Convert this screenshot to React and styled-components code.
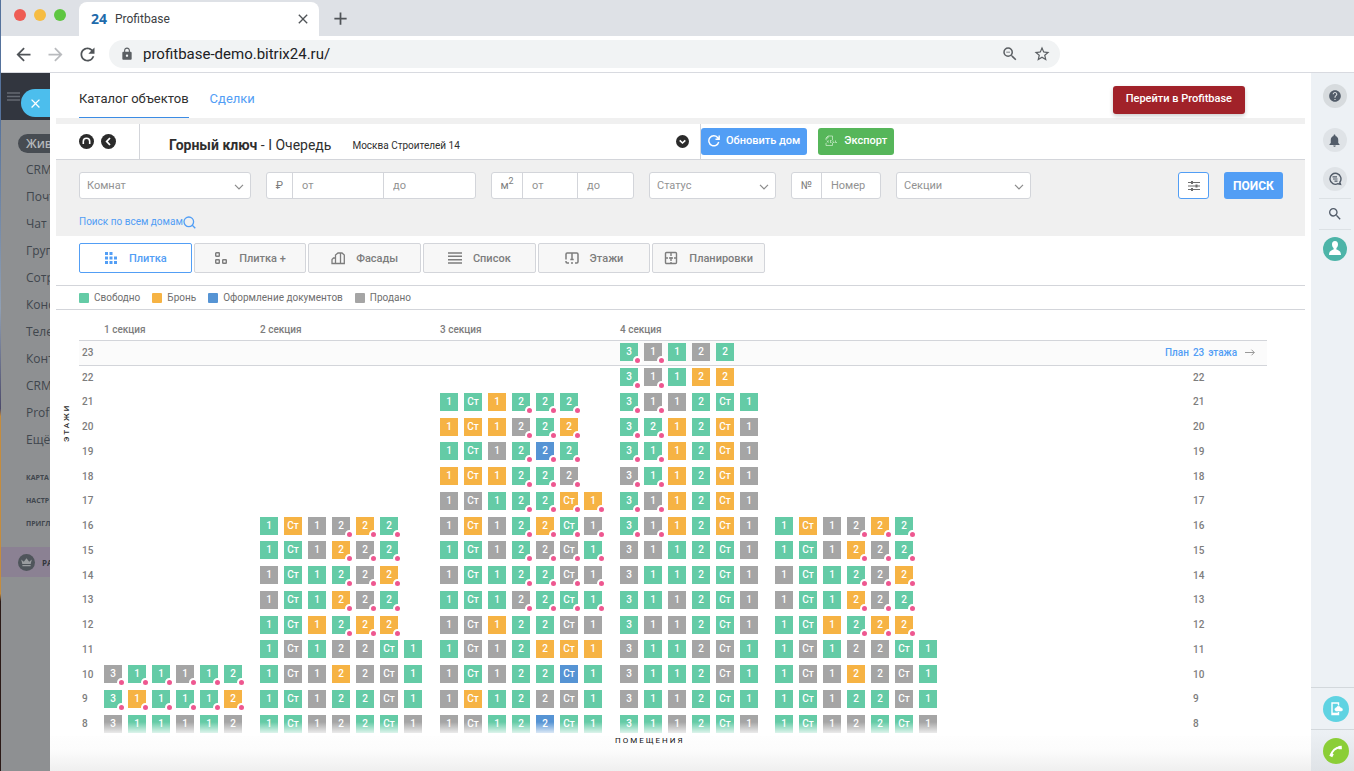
import styled, { createGlobalStyle, css } from 'styled-components'
import {
	MdAdd,
	MdArrowBack,
	MdArrowForward,
	MdClose,
	MdHelp,
	MdLock,
	MdNotifications,
	MdRefresh,
	MdSearch,
	MdStarBorder,
	MdZoomOut
} from 'react-icons/md'

const colors = {
	free: '#64cba6',
	booked: '#f6b344',
	docs: '#5694d4',
	sold: '#a5a5a5',
	blue: '#529ef5',
	grey: '#f0f0f0',
	line: '#d3d5da',
	text: '#7d7d7d',
	dark: '#2f2f2f'
}

const STATUS = { g: colors.free, o: colors.booked, b: colors.docs, s: colors.sold }

// rooms + status letter, a star marks a flat with a promo
const SECTION_1 = {
	10: '3s* 1g* 1g* 1s* 1g* 2g*',
	9: '3g* 1o* 1g* 1g* 1g* 2o*',
	8: '3s 1g 1g 1s 1g 2s'
}

const SECTION_2 = {
	16: '1g Стo 1s 2s* 2o* 2g*',
	15: '1g Стg 1s 2o* 2s* 2g*',
	14: '1s Стg 1g 2g* 2s* 2o*',
	13: '1s Стg 1g 2o* 2s* 2g*',
	12: '1g Стg 1o 2g* 2o* 2o*',
	11: '1g Стs 1g 2s 2s Стg 1g',
	10: '1g Стs 1s 2o 2s Стs 1g',
	9: '1g Стg 1s 2g 2g Стs 1g',
	8: '1g Стg 1s 2s 2g Стg 1s'
}

const SECTION_3 = {
	21: '1g Стg 1o 2g* 2g* 2g*',
	20: '1o Стo 1o 2s* 2g* 2o*',
	19: '1g Стg 1s 2g* 2b* 2g*',
	18: '1o Стo 1o 2g* 2g* 2s*',
	17: '1s Стs 1g 2g* 2g* Стo* 1o*',
	16: '1s Стo 1s 2g* 2o* Стg* 1s*',
	15: '1g Стg 1s 2g* 2s* Стs* 1g*',
	14: '1s Стg 1g 2g* 2g* Стs* 1s*',
	13: '1g Стg 1g 2s* 2g* Стg* 1g*',
	12: '1s Стs 1o 2g 2g Стs 1s',
	11: '1g Стs 1s 2g 2o Стo 1o',
	10: '1s Стg 1s 2g 2g Стb 1g',
	9: '1s Стo 1g 2g 2s Стs 1g',
	8: '1s Стs 1g 2g 2b Стg 1g'
}

const SECTION_4 = {
	23: '3g* 1s* 1g 2s 2g',
	22: '3g* 1s* 1g 2o 2o',
	21: '3g* 1s* 1s 2g Стg 1g',
	20: '3g* 2g* 1o 2g Стo 1s',
	19: '3g* 1g* 1o 2g Стo 1s',
	18: '3s* 1g* 1o 2g Стo 1s',
	17: '3g* 1s* 1o 2g Стo 1s',
	16: '3g* 1s* 1o 2g Стo 1s',
	15: '3s 1s 1g 2g Стg 1s',
	14: '3s 1g 1g 2g Стg 1s',
	13: '3g 1g 1s 2g Стg 1s',
	12: '3g 1s 1s 2g Стg 1s',
	11: '3s 1g 1g 2s Стs 1g',
	10: '3s 1g 1g 2g Стs 1g',
	9: '3s 1g 1s 2g Стg 1g',
	8: '3g 1g 1s 2g Стg 1s'
}

// the last block of the house repeats the second one
const BLOCKS = [SECTION_1, SECTION_2, SECTION_3, SECTION_4, SECTION_2]
const FLOORS = [23, 22, 21, 20, 19, 18, 17, 16, 15, 14, 13, 12, 11, 10, 9, 8]
const MENU = ['CRM', 'Почт', 'Чат и', 'Груп', 'Сотр', 'Конс', 'Теле', 'Конт', 'CRM', 'Profi', 'Ещё']
const SMALL_MENU = ['КАРТА', 'НАСТР', 'ПРИГЛ']

const parseFlats = row =>
	(row || '')
		.split(' ')
		.filter(Boolean)
		.map(code => {
			const promo = code.endsWith('*')
			const flat = promo ? code.slice(0, -1) : code
			return { rooms: flat.slice(0, -1), status: flat.slice(-1), promo }
		})

const VIEWS = [
	{
		name: 'Плитка',
		icon: (
			<svg width="14" height="14" viewBox="0 0 14 14" fill="currentColor">
				<path d="M1 1h3v3H1zM5.500 1h3v3h-3zM1 5.500h3v3H1zM5.500 5.500h3v3h-3zM10 5.500h3v3h-3zM1 10h3v3H1zM5.500 10h3v3h-3zM10 10h3v3h-3z" />
			</svg>
		)
	},
	{
		name: 'Плитка +',
		icon: (
			<svg width="14" height="14" viewBox="0 0 14 14" fill="none" stroke="currentColor" strokeWidth="1.4">
				<rect x="1.7" y="1.7" width="3.6" height="3.6" rx=".6" />
				<rect x="1.7" y="8.7" width="3.6" height="3.6" rx=".6" />
				<rect x="8.7" y="8.7" width="3.6" height="3.6" rx=".6" />
			</svg>
		)
	},
	{
		name: 'Фасады',
		icon: (
			<svg width="14" height="14" viewBox="0 0 14 14" fill="none" stroke="currentColor" strokeWidth="1.3">
				<path d="M4.500 12.500V4L7 2H9.500V12.500zM4.500 7H2.500L1 8.500V12.500H4.500M9.500 2H11L13.300 4V12.500H9.500" />
			</svg>
		)
	},
	{
		name: 'Список',
		icon: (
			<svg width="14" height="14" viewBox="0 0 14 14" fill="none" stroke="currentColor" strokeWidth="1.4">
				<path d="M0 2h14M0 5.3h14M0 8.7h14M0 12h14" />
			</svg>
		)
	},
	{
		name: 'Этажи',
		icon: (
			<svg width="14" height="14" viewBox="0 0 14 14" fill="none" stroke="currentColor" strokeWidth="1.5">
				<path d="M1 8.500V3.200Q1 2 2.200 2H11.800Q13 2 13 3.200V10.800Q13 12 11.800 12H10M8 12H6M4 12H2.200Q1 12 1 10.800V10M7 2V8.500M5.300 8.500h3.400" />
			</svg>
		)
	},
	{
		name: 'Планировки',
		icon: (
			<svg width="14" height="14" viewBox="0 0 14 14" fill="none" stroke="currentColor" strokeWidth="1.4">
				<rect x="1.500" y="1.500" width="11" height="11" rx="1" />
				<path d="M7 1.500V5M7 6v4M7 11v1.500M1.500 7H4M5 7h4M10 7h2.500" />
			</svg>
		)
	}
]

const Chevron = () => (
	<svg width="10" height="6" viewBox="0 0 10 6" fill="none" stroke="#8b8b8b" strokeWidth="1.2">
		<path d="M1 .8 5 4.800 9 .8" />
	</svg>
)

const Picker = ({ name, width }) => (
	<SelectBox $width={width}>
		<select aria-label={name} defaultValue="">
			<option value="">{name}</option>
		</select>
		<Chevron />
	</SelectBox>
)

const BrowserTop = () => (
	<header>
		<TabStrip>
			<Lights>
				<Light $color="#ee5c54" />
				<Light $color="#f6bc42" />
				<Light $color="#5ec641" />
			</Lights>
			<Tab>
				<strong>24</strong>
				<span>Profitbase</span>
				<IconButton aria-label="Закрыть вкладку">
					<MdClose size={16} />
				</IconButton>
			</Tab>
			<IconButton aria-label="Новая вкладка">
				<MdAdd size={21} />
			</IconButton>
		</TabStrip>
		<Toolbar>
			<IconButton aria-label="Назад">
				<MdArrowBack size={21} />
			</IconButton>
			<IconButton aria-label="Вперёд" $faded>
				<MdArrowForward size={21} />
			</IconButton>
			<IconButton aria-label="Обновить">
				<MdRefresh size={21} />
			</IconButton>
			<Address>
				<MdLock size={14} />
				<input aria-label="Адрес" defaultValue="profitbase-demo.bitrix24.ru/" />
				<MdZoomOut size={18} />
				<MdStarBorder size={18} />
			</Address>
		</Toolbar>
	</header>
)

const Sidebar = () => (
	<Side>
		<SideTop>
			<svg width="13" height="9" viewBox="0 0 13 9" stroke="#656a73" strokeWidth="1.5">
				<path d="M0 1h13M0 4.500h13M0 8h13" />
			</svg>
			<CloseSlider aria-label="Закрыть">
				<MdClose size={15} />
			</CloseSlider>
		</SideTop>
		<SideCurrent href="#">Жив</SideCurrent>
		{MENU.map((item, i) => (
			<SideItem href="#" key={i}>
				{item}
			</SideItem>
		))}
		<SideSmall>
			{SMALL_MENU.map(item => (
				<a href="#" key={item}>
					{item}
				</a>
			))}
		</SideSmall>
		<Tariff href="#">
			<svg width="17" height="17" viewBox="0 0 17 17">
				<circle cx="8.500" cy="8.500" r="8.500" fill="#4f555b" />
				<path
					d="M3.200 5.600 5.800 7.700 8.500 4.300 11.200 7.700 13.800 5.600 12.700 10H4.300zM4.400 11h8.200v1.300H4.400z"
					fill="#999c9f"
				/>
			</svg>
			РА
		</Tariff>
	</Side>
)

const Rail = () => (
	<RailBox>
		<RailButton aria-label="Помощь" $bg="#d7dbde">
			<MdHelp size={14} />
		</RailButton>
		<RailButton aria-label="Уведомления" $bg="#dfe3e7">
			<MdNotifications size={15} />
		</RailButton>
		<RailButton aria-label="Чат" $bg="#dfe3e7">
			<svg width="14" height="14" viewBox="0 0 14 14" fill="none" stroke="currentColor" strokeWidth="1.4">
				<path d="M11.800 10.200A5.500 5.500 0 1 0 10 11.700L12.500 12.300z" />
				<path d="M4.500 4.800h4.500M5 7h4.500M6.500 9.200h3" strokeWidth="1.200" />
			</svg>
		</RailButton>
		<RailSearch aria-label="Поиск">
			<MdSearch size={16} />
		</RailSearch>
		<RailButton aria-label="Профиль" $bg="#4db4a8">
			<svg width="24" height="24" viewBox="0 0 24 24" fill="#fff">
				<path d="M12 4c2 0 3.200 1.500 3 3.700-.1 1.500-.8 2.700-1.600 3.300v1.500c2.600.9 4.500 1.800 4.600 5.500H6c.1-3.700 2-4.600 4.600-5.500V11C9.800 10.400 9.100 9.200 9 7.700 8.800 5.500 10 4 12 4z" />
			</svg>
		</RailButton>
		<RailBottom>
			<RoundButton aria-label="Мобильное приложение" $bg="#5fd3e2">
				<svg width="16" height="16" viewBox="0 0 16 16" fill="none" stroke="#fff">
					<path d="M10.500 4.500V2H4v11.500h6.500V11" strokeWidth="1.400" />
					<path d="M4 12.700h7" strokeWidth="2" />
					<path
						d="M8 10a1.700 1.700 0 0 1 .3-3.300A2.300 2.300 0 0 1 12.600 7 1.600 1.600 0 0 1 13.600 10z"
						fill="#fff"
						strokeWidth=".6"
					/>
				</svg>
			</RoundButton>
		</RailBottom>
		<RailBottom>
			<RoundButton aria-label="Телефон" $bg="#8bce37">
				<svg width="16" height="16" viewBox="0 0 16 16" fill="none" stroke="#fff">
					<path d="M3.300 12.500C3.600 8 7.500 4.500 12.500 4.300" strokeWidth="1.900" />
					<path d="M2.800 13.500 4.300 10.500M10.500 4.700 13.800 4.500" strokeWidth="3.300" />
				</svg>
			</RoundButton>
		</RailBottom>
	</RailBox>
)

const FloorRow = ({ floor, active }) => (
	<Row $active={active}>
		<span>{floor}</span>
		{BLOCKS.map((block, i) => (
			<Flats key={i}>
				{parseFlats(block[floor]).map((flat, j) => (
					<Tile key={j} $color={STATUS[flat.status]}>
						{flat.rooms}
						{flat.promo && <PromoDot />}
					</Tile>
				))}
			</Flats>
		))}
		<RowEnd>
			{active ? (
				<PlanLink href="#">
					<span>План</span>
					<span>{floor}</span>
					<span>этажа</span>
					<svg width="10" height="7" viewBox="0 0 10 7" fill="none" stroke="#999">
						<path d="M0 3.500h9.300M6.500 .7 9.300 3.500 6.500 6.300" />
					</svg>
				</PlanLink>
			) : (
				<RightFloor>{floor}</RightFloor>
			)}
		</RowEnd>
	</Row>
)

export default () => (
	<Desktop>
		<GlobalStyle />
		<Wallpaper />
		<Browser>
			<BrowserTop />
			<Page>
				<Sidebar />
				<Slider>
					<Nav>
						<NavLink href="#" $active>
							Каталог объектов
						</NavLink>
						<NavLink href="#">Сделки</NavLink>
						<GoButton>Перейти в Profitbase</GoButton>
					</Nav>
					<House>
						<HouseNav>
							<IconButton aria-label="Все дома">
								<svg width="15" height="15" viewBox="0 0 15 15">
									<circle cx="7.500" cy="7.500" r="7.500" fill="#2b2b2b" />
									<path d="M4.300 10V7.500a3.200 3.200 0 0 1 6.400 0V10" fill="none" stroke="#fff" strokeWidth="1.600" />
								</svg>
							</IconButton>
							<IconButton aria-label="К списку">
								<svg width="15" height="15" viewBox="0 0 15 15">
									<circle cx="7.500" cy="7.500" r="7.500" fill="#2b2b2b" />
									<path d="M9 4 5.700 7.500 9 11" fill="none" stroke="#fff" strokeWidth="1.800" />
								</svg>
							</IconButton>
						</HouseNav>
						<HouseName>
							<h1>
								<b>Горный ключ</b> - I Очередь
							</h1>
							<span>Москва Строителей 14</span>
							<IconButton aria-label="Выбрать дом">
								<svg width="13" height="13" viewBox="0 0 13 13">
									<circle cx="6.500" cy="6.500" r="6.500" fill="#2b2b2b" />
									<path d="M3.700 5.300 6.500 8 9.300 5.300" fill="none" stroke="#fff" strokeWidth="1.600" />
								</svg>
							</IconButton>
						</HouseName>
						<HouseButton $bg={colors.blue}>
							<svg width="12" height="12" viewBox="0 0 12 12" fill="none" stroke="#fff" strokeWidth="1.400">
								<path d="M10.700 7A5 5 0 1 1 9.600 2.500L11 4M11.200 .5V4.200H7.500" />
							</svg>
							Обновить дом
						</HouseButton>
						<HouseButton $bg="#56b65a" $spaced>
							<svg width="12" height="12" viewBox="0 0 12 12" fill="none" stroke="#d5f0d6" strokeWidth=".7">
								<path d="M1 5V3L3 1H7.500V5M1 8v2.500H7.500V8M3 1V3H1" />
								<path d="M2 5.500 3.500 7.500M3.500 5.500 2 7.500M5 5.500h1.500M5 6.500h1M5 7.500h1.500M8 5.500v2h1.500M10.500 5.500v2h1.500" />
							</svg>
							Экспорт
						</HouseButton>
					</House>
					<Filters>
						<FilterRow>
							<Picker name="Комнат" width="172px" />
							<Group $columns="26px 91px 91px">
								<label htmlFor="price-from">₽</label>
								<input id="price-from" type="text" placeholder="от" />
								<input aria-label="Цена до" type="text" placeholder="до" />
							</Group>
							<Group $columns="31px 55px 55px">
								<label htmlFor="area-from">
									м<sup>2</sup>
								</label>
								<input id="area-from" type="text" placeholder="от" />
								<input aria-label="Площадь до" type="text" placeholder="до" />
							</Group>
							<Picker name="Статус" width="127px" />
							<Group $columns="30px 58px">
								<label htmlFor="flat-number">№</label>
								<input id="flat-number" type="text" placeholder="Номер" />
							</Group>
							<Picker name="Секции" width="135px" />
							<MoreButton aria-label="Все фильтры">
								<svg width="12" height="10" viewBox="0 0 12 10" fill="none" stroke="#6d6d6d" strokeWidth="1.200">
									<path d="M0 1.500h12M0 5h12M0 8.500h12" />
									<path d="M4 0v3M8.500 3.500v3M4 7v3" strokeWidth="2" />
								</svg>
							</MoreButton>
							<SearchButton>ПОИСК</SearchButton>
						</FilterRow>
						<SearchLink href="#">
							Поиск по всем домам
							<svg width="13" height="13" viewBox="0 0 13 13" fill="none" stroke="currentColor" strokeWidth="1.300">
								<circle cx="5.800" cy="5.800" r="4.800" />
								<path d="M9.300 9.300 12.300 12.300" />
							</svg>
						</SearchLink>
					</Filters>
					<Views>
						{VIEWS.map(({ name, icon }, i) => (
							<ViewButton key={name} $active={i === 0}>
								{icon}
								<span>{name}</span>
							</ViewButton>
						))}
					</Views>
					<Legend>
						<LegendItem $color={colors.free}>Свободно</LegendItem>
						<LegendItem $color={colors.booked}>Бронь</LegendItem>
						<LegendItem $color={colors.docs}>Оформление документов</LegendItem>
						<LegendItem $color={colors.sold}>Продано</LegendItem>
					</Legend>
					<Board>
						<FloorsTitle>ЭТАЖИ</FloorsTitle>
						<Chess>
							<Heads>
								<span />
								<span>1 секция</span>
								<span>2 секция</span>
								<span>3 секция</span>
								<span>4 секция</span>
							</Heads>
							<Rows>
								{FLOORS.map((floor, i) => (
									<FloorRow key={floor} floor={floor} active={i === 0} />
								))}
								<Fade />
							</Rows>
						</Chess>
					</Board>
					<BoardFooter>ПОМЕЩЕНИЯ</BoardFooter>
				</Slider>
				<Rail />
			</Page>
		</Browser>
	</Desktop>
)

const GlobalStyle = createGlobalStyle`
	* {
		box-sizing: border-box;
	}

	body {
		margin: 0;
		font-family: Roboto, "Liberation Sans", sans-serif;
		font-size: 12px;
		color: ${colors.dark};
	}

	button, input, select {
		font-family: inherit;
		margin: 0;
	}

	button {
		cursor: pointer;
	}

	a {
		text-decoration: none;
	}

	svg {
		flex-shrink: 0;
	}
`

const Desktop = styled.div`
	display: flex;
	height: 100vh;
	overflow: hidden;
`

const Wallpaper = styled.div`
	width: 1px;
	flex-shrink: 0;
	background: linear-gradient(#55729c 0 15%, #8f9fb4 40%, #4c4a6b 53%, #c48c3e 54% 77%, #2b1a17 78%);
`

const Browser = styled.div`
	flex: 1;
	min-width: 0;
	display: flex;
	flex-direction: column;
`

const IconButton = styled.button`
	display: flex;
	padding: 0;
	border: 0;
	background: none;
	color: ${props => (props.$faded ? '#b9bbbe' : '#505458')};
`

const TabStrip = styled.div`
	display: flex;
	align-items: center;
	height: 36px;
	background: #dee1e6;
`

const Lights = styled.div`
	display: flex;
	gap: 8px;
	width: 78px;
	padding: 0 0 6px 13px;
`

const Light = styled.span`
	width: 12px;
	height: 12px;
	border-radius: 50%;
	background: ${props => props.$color};
`

const Tab = styled.div`
	display: flex;
	align-items: center;
	align-self: flex-end;
	width: 240px;
	height: 34px;
	margin-right: 11px;
	padding: 0 8px 0 12px;
	border-radius: 8px 8px 0 0;
	background: #fff;
	font-size: 12px;
	color: #3c4043;

	strong {
		width: 24px;
		padding-bottom: 2px;
		font-family: "Open Sans", sans-serif;
		font-size: 14px;
		color: #1f6bab;
	}

	span {
		flex: 1;
	}
`

const Toolbar = styled.div`
	display: flex;
	align-items: center;
	gap: 11px;
	height: 37px;
	padding-left: 12px;
	border-bottom: 1px solid #d8dae0;
	background: #fff;
`

const Address = styled.div`
	flex: 1;
	display: flex;
	align-items: center;
	gap: 14px;
	height: 28px;
	margin: 0 294px 0 0;
	padding: 0 9px 0 11px;
	border-radius: 14px;
	background: #f1f3f4;
	color: #5b5f63;

	input {
		flex: 1;
		border: 0;
		padding: 0;
		margin-left: -5px;
		background: none;
		font-size: 15px;
		color: #202124;
	}
`

const Page = styled.div`
	flex: 1;
	min-height: 0;
	display: flex;
`

const Side = styled.aside`
	width: 49px;
	flex-shrink: 0;
	overflow: hidden;
	white-space: nowrap;
	background: #8e9092;
	font-family: "Open Sans", sans-serif;
	font-size: 12px;
`

const SideTop = styled.div`
	display: flex;
	align-items: center;
	height: 47px;
	margin-bottom: 14px;
	padding-left: 6px;
	background: #32363f;
`

const CloseSlider = styled.button`
	display: flex;
	align-items: center;
	flex: 1;
	height: 28px;
	margin: 13px 0 0 1px;
	padding: 0 0 0 7px;
	border: 0;
	border-radius: 14px 0 0 14px;
	background: #4cbeed;
	color: #fff;
`

const SideItem = styled.a`
	display: block;
	padding-left: 25px;
	line-height: 27px;
	color: #40464d;
`

const SideCurrent = styled(SideItem)`
	margin: 0 0 3px 17px;
	padding-left: 8px;
	border-radius: 10px 0 0 10px;
	line-height: 19px;
	font-weight: 600;
	background: #474c52;
	color: #b4b7ba;
`

const SideSmall = styled.div`
	margin: 13px 0 14px;

	a {
		display: block;
		padding-left: 25px;
		font-size: 7px;
		font-weight: 700;
		line-height: 23px;
		color: #40464d;
	}
`

const Tariff = styled.a`
	display: flex;
	align-items: center;
	gap: 7px;
	height: 30px;
	margin-top: -2px;
	padding-left: 17px;
	background: #8b8193;
	font-size: 8px;
	font-weight: 700;
	color: #33383e;
`

const Slider = styled.main`
	flex: 1;
	min-width: 0;
	display: flex;
	flex-direction: column;
	background: #fff;
`

const Nav = styled.nav`
	display: flex;
	gap: 21px;
	height: 51px;
	margin: 0 6px;
	padding: 0 60px 0 23px;
	border-bottom: 6px solid ${colors.grey};
`

const NavLink = styled.a`
	padding-top: 7px;
	line-height: 37px;
	font-size: 13px;
	color: ${props => (props.$active ? colors.dark : colors.blue)};
	border-bottom: ${props => (props.$active ? '1px solid #3c8ce4' : '0')};
`

const GoButton = styled.button`
	align-self: center;
	height: 28px;
	margin: 8px 0 0 auto;
	padding: 0 13px 3px;
	border: 0;
	border-radius: 3px;
	background: #a12229;
	box-shadow: 0 2px 4px rgba(0, 0, 0, 0.2);
	font-size: 11px;
	font-weight: 500;
	color: #fff;
`

const House = styled.section`
	display: flex;
	align-items: center;
	height: 36px;
	margin: 0 6px;
	border-bottom: 1px solid ${colors.line};
`

const HouseNav = styled.div`
	display: flex;
	align-items: center;
	gap: 7px;
	width: 84px;
	height: 100%;
	padding-left: 23px;
	border-right: 1px solid ${colors.line};
`

const HouseName = styled.div`
	display: flex;
	align-items: center;
	width: 561px;
	height: 100%;
	padding: 0 11px 0 29px;
	border-right: 1px solid ${colors.line};

	h1 {
		margin: 6px 21px 0 0;
		font-size: 14px;
		line-height: 16px;
		font-weight: 400;
	}

	span {
		flex: 1;
		margin-top: 8px;
		font-size: 10px;
		line-height: 12px;
	}
`

const HouseButton = styled.button`
	display: flex;
	align-items: center;
	gap: ${props => (props.$spaced ? 7 : 6)}px;
	height: 27px;
	margin-left: ${props => (props.$spaced ? 11 : 0)}px;
	padding: 0 7px 2px;
	border: 0;
	border-radius: 3px;
	background: ${props => props.$bg};
	font-size: 11px;
	font-weight: 500;
	color: #fff;
`

const Filters = styled.form`
	height: 76px;
	margin: 0 6px;
	padding: 12px 22px 0 23px;
	background: ${colors.grey};
`

const FilterRow = styled.div`
	display: flex;
	gap: 15px;
	height: 27px;
	margin-bottom: 15px;
`

const field = css`
	border: 1px solid ${colors.line};
	border-radius: 3px;
	background: #fff;
`

const SelectBox = styled.div`
	position: relative;
	width: ${props => props.$width};

	select {
		${field}
		appearance: none;
		width: 100%;
		height: 100%;
		padding: 0 24px 0 7px;
		font-size: 11px;
		color: #929292;
	}

	svg {
		position: absolute;
		right: 7px;
		top: 12px;
		pointer-events: none;
	}
`

const Group = styled.div`
	${field}
	display: grid;
	grid-template-columns: ${props => props.$columns};
	overflow: hidden;

	label,
	input {
		min-width: 0;
		border: 0;
		border-right: 1px solid ${colors.line};
		background: none;
		font-size: 11px;
	}

	label {
		display: flex;
		align-items: center;
		justify-content: center;
		color: ${colors.text};
	}

	sup {
		align-self: flex-start;
		font-size: 9px;
		line-height: 17px;
	}

	input {
		padding: 0 9px;
	}

	input::placeholder {
		color: #929292;
	}

	> :last-child {
		border-right: 0;
	}
`

const MoreButton = styled.button`
	display: flex;
	align-items: center;
	justify-content: center;
	width: 31px;
	margin-left: auto;
	border: 1px solid ${colors.blue};
	border-radius: 3px;
	background: #fff;
`

const SearchButton = styled.button`
	width: 59px;
	padding: 0;
	border: 0;
	border-radius: 3px;
	background: ${colors.blue};
	font-size: 12px;
	font-weight: 700;
	color: #fff;
`

const SearchLink = styled.a`
	display: inline-flex;
	align-items: center;
	font-size: 10px;
	line-height: 14px;
	color: ${colors.blue};
`

const Views = styled.div`
	display: grid;
	grid-template-columns: repeat(6, 1fr);
	gap: 2px;
	width: 686px;
	margin: 7px 29px 12px;
`

const ViewButton = styled.button`
	display: flex;
	align-items: center;
	justify-content: center;
	gap: 11px;
	height: 30px;
	padding: 0;
	border: 1px solid ${props => (props.$active ? colors.blue : colors.line)};
	border-radius: 2px;
	background: ${props => (props.$active ? '#fff' : '#f7f7f7')};
	font-size: 11px;
	font-weight: 500;
	color: ${props => (props.$active ? colors.blue : colors.text)};
`

const Legend = styled.div`
	display: flex;
	align-items: center;
	gap: 12px;
	height: 25px;
	margin: 0 6px;
	padding-left: 23px;
	border: solid ${colors.line};
	border-width: 1px 0;
`

const LegendItem = styled.span`
	display: flex;
	align-items: center;
	gap: 5px;
	font-size: 10px;
	color: #6f6f6f;

	&:before {
		content: '';
		width: 10px;
		height: 10px;
		border-radius: 1px;
		background: ${props => props.$color};
	}
`

const Board = styled.section`
	flex: 1;
	min-height: 0;
	display: flex;
	padding-right: 44px;
`

const FloorsTitle = styled.div`
	width: 29px;
	padding: 0 12px 94px 0;
	writing-mode: vertical-rl;
	transform: rotate(180deg);
	text-align: right;
	line-height: 10px;
	font-size: 8px;
	font-weight: 500;
	letter-spacing: 2px;
`

const Chess = styled.div`
	flex: 1;
	min-width: 0;
	display: flex;
	flex-direction: column;
	font-size: 10px;
	font-weight: 500;
	color: ${colors.text};
`

const Columns = styled.div`
	display: grid;
	grid-template-columns: 25px 156px 180px 180px 155px 1fr 102px;
	align-items: center;
`

const Heads = styled(Columns)`
	height: 30px;
	padding-top: 8px;
`

const Rows = styled.div`
	position: relative;
	flex: 1;
	min-height: 0;
	display: grid;
	grid-template-rows: repeat(16, 1fr);
`

const Row = styled(Columns)`
	background: ${props => (props.$active ? '#fbfbfb' : 'none')};
	box-shadow: ${props => (props.$active ? `inset 0 1px ${colors.line}, 0 1px ${colors.line}` : 'none')};

	> span {
		padding-left: 3px;
	}
`

const Flats = styled.div`
	display: flex;
	gap: 6px;
`

const Tile = styled.button`
	position: relative;
	width: 18px;
	height: 18px;
	padding: 0;
	border: 0;
	background: ${props => props.$color};
	font-size: 10px;
	font-weight: 500;
	line-height: 18px;
	color: #fff;
`

const PromoDot = styled.i`
	position: absolute;
	left: 13px;
	top: 13px;
	width: 9px;
	height: 9px;
	border: 2px solid #fff;
	border-radius: 50%;
	background: #ee5790;
`

const RowEnd = styled.div`
	display: flex;
`

const RightFloor = styled.span`
	padding-left: 28px;
`

const PlanLink = styled.a`
	display: flex;
	align-items: center;
	gap: 4px;
	color: ${colors.blue};

	svg {
		margin-left: 4px;
	}
`

const Fade = styled.div`
	position: absolute;
	left: 25px;
	right: 102px;
	bottom: 0;
	height: 14px;
	background: linear-gradient(rgba(255, 255, 255, 0), #fff);
	pointer-events: none;
`

const BoardFooter = styled.footer`
	height: 35px;
	padding-left: 565px;
	background: linear-gradient(#fefefe, #fcfcfc 40%, #efefef);
	font-size: 8px;
	line-height: 10px;
	letter-spacing: 2px;
	color: #111;
`

const RailBox = styled.aside`
	display: flex;
	flex-direction: column;
	align-items: center;
	width: 43px;
	flex-shrink: 0;
	padding: 11px 0 0;
	background: linear-gradient(#edf1f5 94%, #dfe3e7);
`

const RoundButton = styled.button`
	display: flex;
	align-items: center;
	justify-content: center;
	width: 26px;
	height: 26px;
	margin-left: 6px;
	padding: 0;
	border: 0;
	border-radius: 50%;
	background: ${props => props.$bg};
	color: #525c69;
`

const RailButton = styled(RoundButton)`
	width: 24px;
	height: 24px;
	margin-left: 4px;

	& + & {
		margin-top: 20px;
	}

	& + & + & {
		margin-top: 15px;
	}
`

const RailSearch = styled.button`
	display: flex;
	align-items: center;
	justify-content: center;
	width: 32px;
	height: 32px;
	margin: 7px 0 7px 4px;
	padding: 0;
	border: solid #dce1e5;
	border-width: 1px 0;
	background: none;
	color: #525c69;
`

const RailBottom = styled.div`
	display: flex;
	align-items: center;
	justify-content: center;
	width: 100%;
	height: 42px;
	border-top: 1px solid #d3d8dc;

	${RailSearch} ~ &:nth-last-child(2) {
		margin-top: auto;
	}
`
